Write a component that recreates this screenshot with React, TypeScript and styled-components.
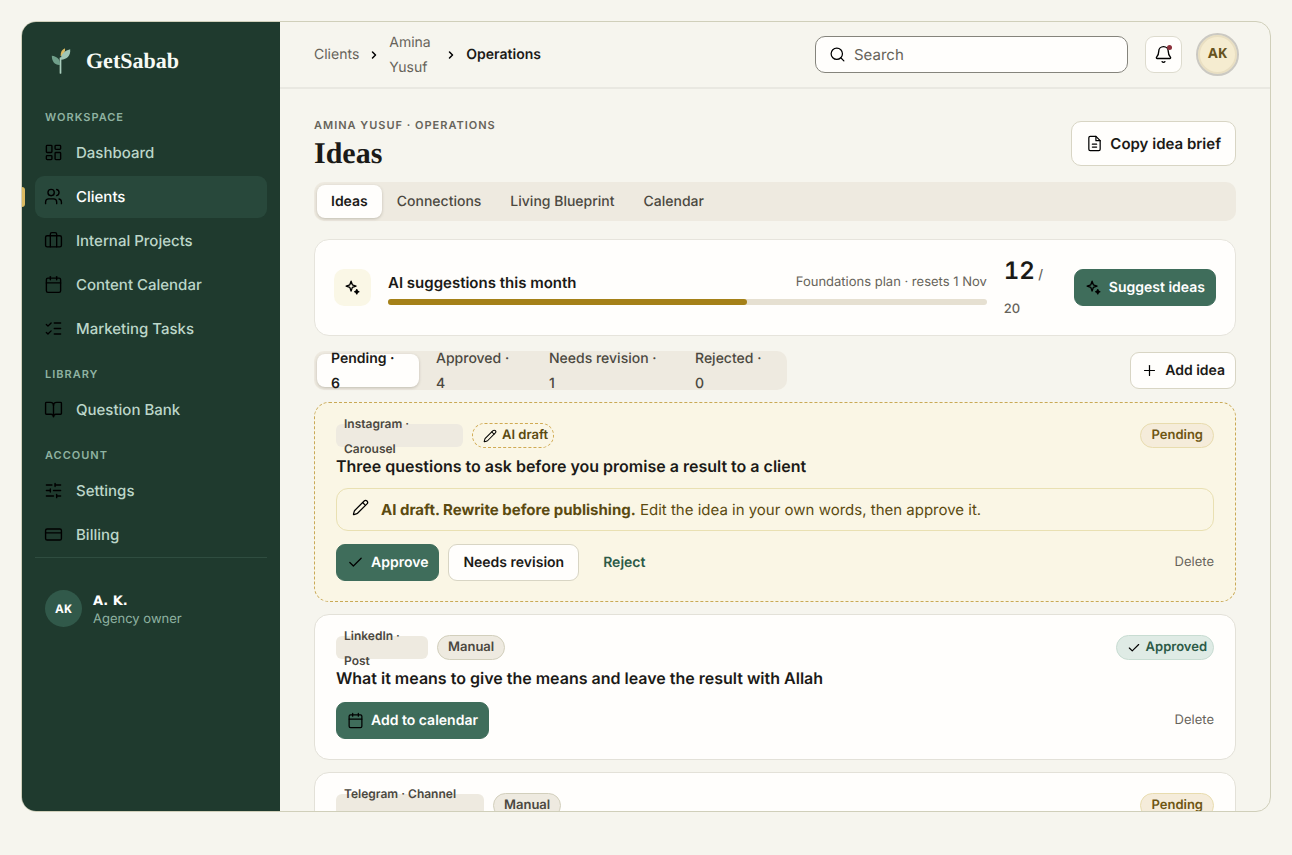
import React from "react";
import styled, { createGlobalStyle, css } from "styled-components";
import {
  LayoutDashboard, Users, Briefcase, Calendar, ListChecks, BookOpen, SlidersHorizontal,
  CreditCard, ChevronRight, Search, Bell, Plus, Check, Pencil,
} from "lucide-react";

const GlobalStyle = createGlobalStyle`
  *, *::before, *::after { box-sizing: border-box; }
  body {
    margin: 0;
    background: #f6f5ee;
    color: #1b1a17;
    font-family: Inter, "Liberation Sans", sans-serif;
    font-size: 14px;
    line-height: 25px;
    text-rendering: geometricPrecision;
  }
  h1, h2, h3, p, ul { margin: 0; padding: 0; }
  button, input { font: inherit; color: inherit; text-rendering: inherit; }
  button { cursor: pointer; }
  svg { flex: none; display: block; }
`;

const Frame = styled.div`
  display: flex;
  height: calc(100vh - 64px);
  margin: 21px;
  border: 1px solid #d0cfba;
  border-radius: 15px;
  overflow: hidden;
`;

/* Sidebar */
const Sidebar = styled.aside`
  flex: none;
  width: 258px;
  padding: 0 13px;
  background: #1f3a2e;
  color: #bcd6c9;
`;
const Brand = styled.a`
  display: flex;
  align-items: center;
  gap: 15px;
  height: 71px;
  padding: 6px 16px 0;
  color: #f7faf5;
  font: bold 22px/36px "Liberation Serif", serif;
  text-decoration: none;
`;
const Group = styled.section`
  display: flex;
  flex-direction: column;
  gap: 2px;
  margin-top: 12px;
`;
const GroupLabel = styled.h2`
  padding-left: 10px;
  color: #8fb3a2;
  font-size: 11px;
  font-weight: 600;
  letter-spacing: 1px;
  line-height: 25px;
`;
const NavLink = styled.a<{ $active?: boolean }>`
  position: relative;
  display: flex;
  align-items: center;
  gap: 13px;
  height: 42px;
  padding: 0 9px 1px;
  border-radius: 9px;
  color: inherit;
  font-size: 15px;
  font-weight: 500;
  text-decoration: none;
  svg { color: #000; }
  ${(p) => p.$active && css`
    background: #28483b;
    color: #fff;
    &::before {
      content: "";
      position: absolute;
      left: -13px;
      top: 11px;
      width: 3px;
      height: 20px;
      border-radius: 0 3px 3px 0;
      background: #dcbb62;
    }
  `}
`;
const Account = styled.div`
  display: flex;
  align-items: center;
  gap: 11px;
  margin-top: 1px;
  padding: 31px 10px 0;
  border-top: 1px solid #2f4d40;
`;
const Initials = styled.span`
  display: grid;
  place-items: center;
  width: 37px;
  height: 37px;
  border-radius: 50%;
  background: #31594a;
  color: #fff;
  font: bold 12px/25px "Noto Sans", sans-serif;
`;
const AccountText = styled.div`
  display: flex;
  flex-direction: column;
  padding-top: 4px;
  font-size: 13px;
  line-height: 18px;
  color: #8fb3a2;
  strong { color: #fff; font: bold 13px/17px "DejaVu Sans", sans-serif; }
`;

/* Main column */
const Main = styled.div`
  flex: 1;
  min-width: 0;
  display: flex;
  flex-direction: column;
`;
const TopBar = styled.header`
  flex: none;
  display: flex;
  align-items: center;
  height: 67px;
  padding: 0 31px 0 34px;
  border-bottom: 2px solid #e9e8e1;
`;
const Crumbs = styled.nav`
  display: flex;
  align-items: center;
  gap: 9px;
  margin-right: auto;
  color: #66635a;
  a { color: inherit; text-decoration: none; }
  strong { color: #1b1a17; font-weight: 600; }
`;
const ClientCrumb = styled.a`
  width: 47px;
`;
const SearchBox = styled.label`
  display: flex;
  align-items: center;
  gap: 8px;
  width: 313px;
  height: 37px;
  padding: 0 13px;
  border: 1px solid #85847c;
  border-radius: 10px;
  background: #fffefc;
  input {
    flex: 1;
    min-width: 0;
    padding: 0;
    border: 0;
    outline: 0;
    background: none;
    font-size: 15px;
  }
  input::placeholder { color: #66635a; opacity: 1; }
`;
const BellButton = styled.button`
  position: relative;
  display: grid;
  place-items: center;
  width: 37px;
  height: 37px;
  margin: 0 14px 0 17px;
  padding: 0;
  border: 1px solid #dddbce;
  border-radius: 9px;
  background: #fffefc;
  &::after {
    content: "";
    position: absolute;
    top: 8px;
    right: 9px;
    width: 5px;
    height: 5px;
    border-radius: 50%;
    background: #8b2f3a;
  }
`;
const AvatarButton = styled.button`
  width: 43px;
  height: 43px;
  padding: 0 0 2px;
  border: 2px solid #cbc9c2;
  border-radius: 50%;
  background: #f5ecd0;
  box-shadow: inset 0 0 0 2px #e9dfc2;
  color: #665320;
  font: bold 14px/25px "Noto Sans", sans-serif;
`;
const Page = styled.main`
  flex: 1;
  min-height: 0;
  overflow: hidden;
  padding: 32px 34px 0;
`;
const PageHead = styled.div`
  display: flex;
  align-items: center;
  justify-content: space-between;
  height: 45px;
`;
const Eyebrow = styled.p`
  color: #66635a;
  font-size: 11px;
  font-weight: 600;
  letter-spacing: 1px;
  line-height: 19px;
`;
const Title = styled.h1`
  font: bold 30px/37px "Liberation Serif", serif;
`;
const Button = styled.button<{ $kind?: "primary" | "ghost"; $large?: boolean; $icon?: boolean }>`
  display: inline-flex;
  align-items: center;
  gap: 7px;
  height: ${(p) => (p.$large ? 45 : 37)}px;
  padding: 0 ${(p) => (p.$icon && !p.$large ? 10 : 14)}px;
  border: 1px solid #d8d5c4;
  border-radius: ${(p) => (p.$large ? 10 : 9)}px;
  background: #fffefc;
  font-size: ${(p) => (p.$large ? 15 : 14)}px;
  font-weight: 600;
  white-space: nowrap;
  svg { color: #000; }
  ${(p) => p.$kind === "primary" && css`
    border-color: #3f6d5b;
    background: #3f6d5b;
    color: #fff;
  `}
  ${(p) => p.$kind === "ghost" && css`
    border-color: transparent;
    background: none;
    color: #2c5a47;
  `}
`;
const Segments = styled.div`
  display: flex;
  gap: 3px;
  height: 39px;
  padding: 3px;
  border-radius: 10px;
  background: #eeeae0;
`;
const PageTabs = styled(Segments)`
  gap: 1px;
  margin: 16px 0 18px;
`;
const Segment = styled.button<{ $active?: boolean; $width?: number }>`
  display: flex;
  align-items: center;
  width: ${(p) => (p.$width ? `${p.$width}px` : "auto")};
  padding: 0 14px;
  border: 0;
  border-radius: 8px;
  background: none;
  color: #4b483f;
  font-weight: 500;
  text-align: left;
  white-space: pre-line;
  ${(p) => p.$active && css`
    background: #fffefc;
    color: #1b1a17;
    font-weight: 600;
    box-shadow: 0 1px 3px rgba(60, 55, 35, 0.25);
  `}
`;
const Usage = styled.section`
  display: flex;
  align-items: center;
  gap: 17px;
  padding: 13px 19px;
  border: 1px solid #e6e4dc;
  border-radius: 15px;
  background: #fffefc;
`;
const UsageIcon = styled.span`
  display: grid;
  place-items: center;
  width: 37px;
  height: 37px;
  border-radius: 10px;
  background: #faf7e6;
`;
const UsageBody = styled.div`
  flex: 1;
`;
const UsageHead = styled.div`
  display: flex;
  justify-content: space-between;
  margin-bottom: 4px;
  font-size: 13px;
  color: #66635a;
  h2 { color: #1b1a17; font-size: 15px; font-weight: 600; line-height: 25px; }
`;
const Track = styled.div`
  height: 6px;
  border-radius: 3px;
  background: #e6e0d1;
`;
const Fill = styled.div`
  height: 6px;
  border-radius: 3px;
  background: #a58118;
`;
const Count = styled.p`
  width: 53px;
  padding-top: 1px;
  font-size: 24px;
  line-height: 34px;
  strong { font-weight: 600; font-feature-settings: "tnum"; }
  span { color: #66635a; font-size: 13px; font-weight: 500; line-height: 1; }
`;
const FilterRow = styled.div`
  display: flex;
  align-items: center;
  justify-content: space-between;
  margin: 15px 0 12px;
`;
const Cards = styled.div`
  display: flex;
  flex-direction: column;
  gap: 12px;
`;
const Card = styled.article<{ $draft?: boolean }>`
  padding: 20px 21px;
  border: 1px ${(p) => (p.$draft ? "dashed #c9a956" : "solid #e3e1d8")};
  border-radius: 15px;
  background: ${(p) => (p.$draft ? "#faf6e5" : "#fffefc")};
`;
const CardHead = styled.div`
  display: flex;
  align-items: center;
  gap: 9px;
  height: 25px;
  margin-bottom: 6px;
`;
const Channel = styled.span<{ $width: number }>`
  display: flex;
  align-items: center;
  width: ${(p) => p.$width}px;
  height: 23px;
  padding: 0 8px;
  border-radius: 6px;
  background: #eeeae0;
  color: #4b483f;
  font-size: 12px;
  font-weight: 600;
  white-space: pre-line;
  span { min-height: 50px; }
`;
const Tag = styled.span<{ $tone: "draft" | "manual" | "pending" | "approved" }>`
  display: inline-flex;
  align-items: center;
  gap: 5px;
  height: 25px;
  padding: 0 10px;
  border: 1px solid;
  border-radius: 13px;
  font-size: 13px;
  font-weight: 600;
  svg { color: #000; }
  ${(p) => p.$tone === "draft" && css`
    padding-right: 5px;
    border: 1px dashed #d0aa52;
    color: #5b4a10;
  `}
  ${(p) => p.$tone === "manual" && css`
    border-color: #d2cfbc;
    background: #eeeae0;
    color: #4b483f;
  `}
  ${(p) => p.$tone === "pending" && css`
    margin-left: auto;
    border-color: #e8dcae;
    background: #f5ecda;
    color: #6e5613;
  `}
  ${(p) => p.$tone === "approved" && css`
    margin-left: auto;
    padding-right: 6px;
    border-color: #c8dcd2;
    background: #dfebe5;
    color: #2c5a47;
  `}
`;
const CardTitle = styled.h3`
  font-size: 16px;
  font-weight: 600;
  line-height: 25px;
`;
const Notice = styled.p`
  display: flex;
  align-items: center;
  gap: 12px;
  height: 43px;
  margin: 9px 0 13px;
  padding: 0 15px;
  border: 1px solid #e9e0b2;
  border-radius: 12px;
  color: #5b4a10;
  font-size: 15px;
  svg { color: #000; margin-bottom: 4px; }
`;
const Actions = styled.div`
  display: flex;
  align-items: center;
  gap: 9px;
  margin-top: 11px;
`;
const DeleteButton = styled.button`
  margin-left: auto;
  padding: 0;
  border: 0;
  background: none;
  color: #66635a;
  font-size: 13px;
`;

const Logo = () => (
  <svg width="20" height="26" viewBox="0 0 20 26" fill="none" aria-hidden="true">
    <path d="M9.500 25V10" stroke="#a9cdbc" strokeWidth="1.700" strokeLinecap="round" />
    <path d="M9 17C4 17.500 .8 13.500 .8 7.800C6 8.500 9.500 11.500 9 17Z" fill="#6f9f8a" />
    <path d="M9.600 8C9.500 4 11 1.500 14 .3C14.500 3 13.500 6 10.500 8Z" fill="#dcbb62" />
    <path d="M10 11.800C9.500 6.500 13 3 19.200 1.300C19.800 7.500 16 11.500 10 11.800Z" fill="#a0c6b5" />
  </svg>
);

const Sparkle = () => (
  <svg width="17" height="17" viewBox="0 0 24 24" fill="none" stroke="#000" strokeWidth="1.9" strokeLinejoin="round" aria-hidden="true">
    <path d="M10 3l1.800 5.200L17 10l-5.200 1.800L10 17l-1.800-5.200L3 10l5.200-1.800z" />
    <path d="M18 15l.9 2.100L21 18l-2.100.9L18 21l-.9-2.100L15 18l2.100-.9z" fill="#000" />
  </svg>
);

const Brief = () => (
  <svg width="17" height="17" viewBox="0 0 24 24" fill="none" stroke="#000" strokeWidth="1.75" strokeLinecap="round" strokeLinejoin="round" aria-hidden="true">
    <path d="M14 2H6a2 2 0 0 0-2 2v16a2 2 0 0 0 2 2h12a2 2 0 0 0 2-2V8z" />
    <path d="M14 2v6h6M9 13h6M9 17h6" />
  </svg>
);

const navGroups = [
  { label: "WORKSPACE", items: [
    { text: "Dashboard", Icon: LayoutDashboard },
    { text: "Clients", Icon: Users, active: true },
    { text: "Internal Projects", Icon: Briefcase },
    { text: "Content Calendar", Icon: Calendar },
    { text: "Marketing Tasks", Icon: ListChecks },
  ] },
  { label: "LIBRARY", items: [{ text: "Question Bank", Icon: BookOpen }] },
  { label: "ACCOUNT", items: [
    { text: "Settings", Icon: SlidersHorizontal },
    { text: "Billing", Icon: CreditCard },
  ] },
];

const filters = [
  { label: "Pending", count: 6, width: 102 },
  { label: "Approved", count: 4, width: 110 },
  { label: "Needs revision", count: 1, width: 143 },
  { label: "Rejected", count: 0, width: 103 },
];

const stroke = 1.75;
const used = 12;
const allowance = 20;

export default function App() {
  return (
    <>
      <GlobalStyle />
      <Frame>
        <Sidebar>
          <Brand href="#"><Logo />GetSabab</Brand>
          <nav aria-label="Primary">
            {navGroups.map((group) => (
              <Group key={group.label}>
                <GroupLabel>{group.label}</GroupLabel>
                {group.items.map(({ text, Icon, ...rest }) => (
                  <NavLink key={text} href="#" $active={"active" in rest}>
                    <Icon size={19} strokeWidth={stroke} />{text}
                  </NavLink>
                ))}
              </Group>
            ))}
          </nav>
          <Account>
            <Initials>AK</Initials>
            <AccountText><strong>A. K.</strong>Agency owner</AccountText>
          </Account>
        </Sidebar>
        <Main>
          <TopBar>
            <Crumbs aria-label="Breadcrumb">
              <a href="#">Clients</a>
              <ChevronRight size={12} color="#000" strokeWidth={3} />
              <ClientCrumb href="#">Amina Yusuf</ClientCrumb>
              <ChevronRight size={12} color="#000" strokeWidth={3} />
              <strong>Operations</strong>
            </Crumbs>
            <SearchBox>
              <Search size={17} color="#000" strokeWidth={stroke} />
              <input type="search" placeholder="Search" aria-label="Search" />
            </SearchBox>
            <BellButton aria-label="Notifications"><Bell size={19} color="#000" strokeWidth={stroke} /></BellButton>
            <AvatarButton>AK</AvatarButton>
          </TopBar>
          <Page>
            <PageHead>
              <div>
                <Eyebrow>AMINA YUSUF · OPERATIONS</Eyebrow>
                <Title>Ideas</Title>
              </div>
              <Button $large $icon><Brief />Copy idea brief</Button>
            </PageHead>
            <PageTabs role="tablist">
              {["Ideas", "Connections", "Living Blueprint", "Calendar"].map((tab, i) => (
                <Segment key={tab} role="tab" aria-selected={i === 0} $active={i === 0}>{tab}</Segment>
              ))}
            </PageTabs>
            <Usage>
              <UsageIcon><Sparkle /></UsageIcon>
              <UsageBody>
                <UsageHead>
                  <h2>AI suggestions this month</h2>
                  Foundations plan · resets 1 Nov
                </UsageHead>
                <Track><Fill style={{ width: `${(used / allowance) * 100}%` }} /></Track>
              </UsageBody>
              <Count><strong>{used}</strong><span> / {allowance}</span></Count>
              <Button $kind="primary" $icon><Sparkle />Suggest ideas</Button>
            </Usage>
            <FilterRow>
              <Segments>
                {filters.map((f, i) => (
                  <Segment key={f.label} $active={i === 0} $width={f.width}>{`${f.label} ·\n${f.count}`}</Segment>
                ))}
              </Segments>
              <Button $icon><Plus size={17} strokeWidth={stroke} />Add idea</Button>
            </FilterRow>
            <Cards>
              <Card $draft>
                <CardHead>
                  <Channel $width={127}><span>{"Instagram ·\nCarousel"}</span></Channel>
                  <Tag $tone="draft"><Pencil size={14} strokeWidth={stroke} />AI draft</Tag>
                  <Tag $tone="pending">Pending</Tag>
                </CardHead>
                <CardTitle>Three questions to ask before you promise a result to a client</CardTitle>
                <Notice>
                  <Pencil size={17} strokeWidth={stroke} />
                  <span><strong>AI draft. Rewrite before publishing.</strong> Edit the idea in your own words, then approve it.</span>
                </Notice>
                <Actions>
                  <Button $kind="primary" $icon><Check size={17} strokeWidth={stroke} />Approve</Button>
                  <Button>Needs revision</Button>
                  <Button $kind="ghost">Reject</Button>
                  <DeleteButton>Delete</DeleteButton>
                </Actions>
              </Card>
              <Card>
                <CardHead>
                  <Channel $width={92}><span>{"LinkedIn ·\nPost"}</span></Channel>
                  <Tag $tone="manual">Manual</Tag>
                  <Tag $tone="approved"><Check size={14} strokeWidth={2} />Approved</Tag>
                </CardHead>
                <CardTitle>What it means to give the means and leave the result with Allah</CardTitle>
                <Actions>
                  <Button $kind="primary" $icon><Calendar size={17} strokeWidth={stroke} />Add to calendar</Button>
                  <DeleteButton>Delete</DeleteButton>
                </Actions>
              </Card>
              <Card>
                <CardHead>
                  <Channel $width={148}><span>Telegram · Channel</span></Channel>
                  <Tag $tone="manual">Manual</Tag>
                  <Tag $tone="pending">Pending</Tag>
                </CardHead>
              </Card>
            </Cards>
          </Page>
        </Main>
      </Frame>
    </>
  );
}
